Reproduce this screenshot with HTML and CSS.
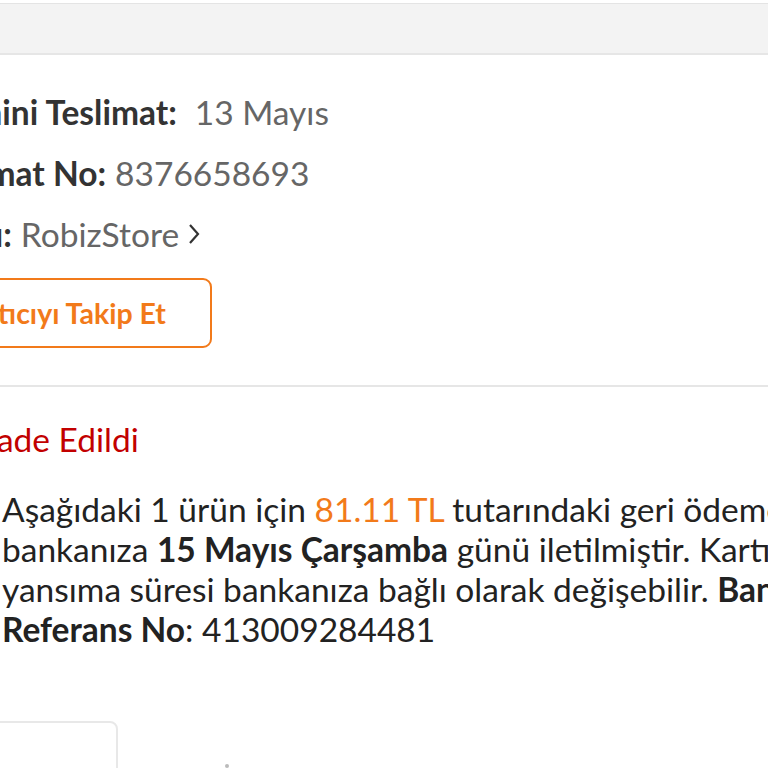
FILE: index.html
```html
<!DOCTYPE html>
<html lang="tr">
<head>
<meta charset="utf-8">
<link rel="stylesheet" href="styles.css">
</head>
<body>
<div class="topbar"></div>
<section class="info">
  <div class="row"><span class="label">Tahmini Teslimat:</span><span class="value gap">13 Mayıs</span></div>
  <div class="row"><span class="label">Teslimat No:</span><span class="value">8376658693</span></div>
  <div class="row"><span class="label">Satıcı:</span><span class="value">RobizStore</span>
    <svg class="chev" viewBox="0 0 12 22" width="12" height="22"><path d="M2 2 L10 11 L2 20" fill="none" stroke="#333" stroke-width="2.2"/></svg>
  </div>
  <button class="follow">Satıcıyı Takip Et</button>
</section>
<hr class="divider">
<section class="refund">
  <h2 class="refund-title">İade Edildi</h2>
  <p class="refund-text">
    <span class="line">Aşağıdaki 1 ürün için <span class="amount">81.11 TL</span> tutarındaki geri ödemeniz</span>
    <span class="line">bankanıza <b>15 Mayıs Çarşamba</b> günü iletilmiştir. Kartınıza</span>
    <span class="line">yansıma süresi bankanıza bağlı olarak değişebilir. <b>Banka</b></span>
    <span class="line"><b>Referans No</b>: 413009284481</span>
  </p>
</section>
<div class="bottom">
  <div class="card"></div>
  <span class="dot"></span>
</div>
</body>
</html>
```
FILE: styles.css
```css
html, body {
  margin: 0;
  padding: 0;
  width: 768px;
  height: 768px;
  overflow: hidden;
  background: #fff;
  font-family: Lato, "Open Sans", sans-serif;
  color: #333;
}
.topbar {
  height: 49px;
  margin-top: 3px;
  background: #f3f3f3;
  border-top: 1px solid #e4e4e4;
  border-bottom: 2px solid #e6e6e6;
}
.info {
  margin-left: -78px;
  padding-top: 26px;
  display: flex;
  flex-direction: column;
  align-items: flex-start;
}
.row {
  display: flex;
  align-items: center;
  height: 61px;
  font-size: 33.5px;
  white-space: nowrap;
}
.label {
  font-weight: 700;
  color: #333;
}
.value {
  color: #666;
  margin-left: 9px;
}
.value.gap { margin-left: 18px; }
.chev { margin-left: 9px; }
.follow {
  margin-top: 14px;
  height: 70px;
  width: 290px;
  padding: 0;
  text-align: center;
  background: #fff;
  border: 2px solid #f27a1a;
  border-radius: 9px;
  color: #f27a1a;
  font-family: inherit;
  font-weight: 700;
  font-size: 28.5px;
}
.divider {
  margin: 37px 0 0;
  border: 0;
  height: 2px;
  background: #e6e6e6;
}
.refund {
  padding-top: 32px;
}
.refund-title {
  margin: 0 0 0 -12px;
  font-weight: 400;
  font-size: 33.5px;
  line-height: 40px;
  color: #c20000;
}
.refund-text {
  margin: 30px 0 0 2px;
  font-size: 33.5px;
  line-height: 40px;
  color: #222;
}
.line {
  display: block;
  white-space: nowrap;
}
.refund-text b { font-weight: 700; color: #222; }
.amount { color: #f27a1a; }
.bottom {
  position: relative;
  margin-top: 72px;
}
.card {
  margin-left: -40px;
  width: 154px;
  height: 80px;
  border: 2px solid #e8e8e8;
  border-radius: 8px;
}
.dot {
  position: absolute;
  left: 225px;
  top: 43px;
  width: 4px;
  height: 4px;
  border-radius: 50%;
  background: #bbb;
}
```
